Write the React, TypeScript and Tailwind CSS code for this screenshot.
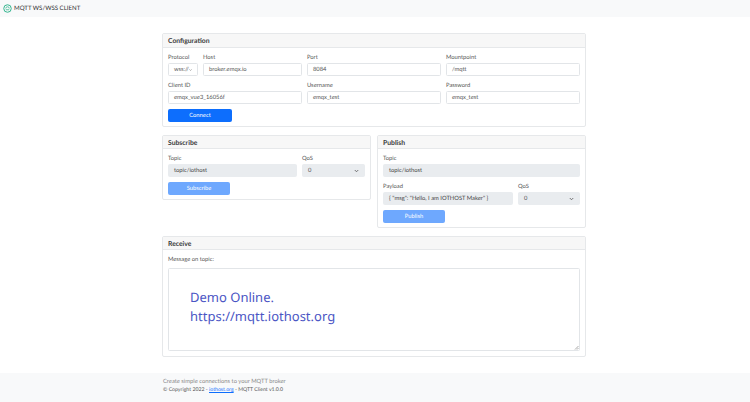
const font = { fontFamily: 'Lato, "Noto Sans", sans-serif' };

function Field({ label, value, className = "", disabled = false }: { label: string; value: string; className?: string; disabled?: boolean }) {
  return (
    <div className={className}>
      <div className="h-[9px] text-[5.8px] leading-[9.5px] text-[#555]">{label}</div>
      <div
        className={`mt-[1px] flex h-[13px] items-center truncate rounded-[1.5px] border border-[#e2e5e8] px-[5px] pt-[1.5px] text-[5.8px] ${
          disabled ? "border-[#e9ecef] bg-[#e9ecef] text-[#444]" : "bg-white text-[#555]"
        }`}
      >
        {value}
      </div>
    </div>
  );
}

function SelectField({ label, value, className = "", disabled = false }: { label: string; value: string; className?: string; disabled?: boolean }) {
  return (
    <div className={className}>
      <div className="h-[9px] text-[5.8px] leading-[9.5px] text-[#555]">{label}</div>
      <div
        className={`mt-[1px] flex h-[13px] items-center justify-between rounded-[1.5px] border pl-[5px] pr-[5px] text-[5.8px] text-[#555] ${
          disabled ? "border-[#e9ecef] bg-[#e9ecef]" : "border-[#e2e5e8] bg-white"
        }`}
      >
        <span className="pt-[1.5px]">{value}</span>
        <svg width="5" height="4" viewBox="0 0 10 8" fill="none" stroke="#555" strokeWidth="1.6">
          <path d="M1.5 2 L5 5.5 L8.5 2" />
        </svg>
      </div>
    </div>
  );
}

function Card({ title, className = "", headClass = "h-[13px]", children }: { title: string; className?: string; headClass?: string; children: React.ReactNode }) {
  return (
    <div className={`overflow-hidden rounded-[2px] border border-[#e6e8ea] bg-white ${className}`}>
      <div className={`flex items-center border-b border-[#e6e8ea] bg-[#f7f7f7] px-[5px] pt-[1.5px] text-[6.8px] font-bold text-[#3a3a3a] ${headClass}`}>
        {title}
      </div>
      <div className="p-[5px]">{children}</div>
    </div>
  );
}

export default function App() {
  return (
    <div className="flex h-[402px] w-[750px] flex-col overflow-hidden bg-white [text-rendering:geometricPrecision]" style={font}>
      {/* Header */}
      <div className="flex h-[17px] items-center gap-[2px] bg-[#f8f9fa] pl-[3px]">
        <svg width="9" height="9" viewBox="0 0 18 18" fill="none">
          <circle cx="9" cy="9" r="7.5" stroke="#36b58f" strokeWidth="2" />
          <path d="M5.5 9 a3.5 3.5 0 0 1 7 0 M5.5 11.5 h7" stroke="#36b58f" strokeWidth="1.6" />
        </svg>
        <span className="text-[6.1px] text-[#333]">MQTT WS/WSS CLIENT</span>
      </div>

      {/* Main */}
      <div className="ml-[162px] mt-[16px] flex w-[424px] flex-col">
        <Card title="Configuration" headClass="h-[14px]" className="h-[94px]">
          <div className="flex gap-[5px]">
            <SelectField label="Protocol" value="wss://" className="w-[30px]" />
            <Field label="Host" value="broker.emqx.io" className="w-[99px]" />
            <Field label="Port" value="8084" className="w-[134px]" />
            <Field label="Mountpoint" value="/mqtt" className="w-[134px]" />
          </div>
          <div className="mt-[5px] flex gap-[5px]">
            <Field label="Client ID" value="emqx_vue3_16056f" className="w-[134px]" />
            <Field label="Username" value="emqx_test" className="w-[134px]" />
            <Field label="Password" value="emqx_test" className="w-[134px]" />
          </div>
          <div className="mt-[5px] flex h-[13px] w-[64px] items-center justify-center rounded-[2px] bg-[#0d6efd] pt-[1.5px] text-[5.8px] text-white">
            Connect
          </div>
        </Card>

        <div className="mt-[8px] flex items-start justify-between">
          <Card title="Subscribe" className="h-[65px] w-[209px]">
            <div className="flex gap-[5px]">
              <Field label="Topic" value="topic/iothost" className="w-[129px]" disabled />
              <SelectField label="QoS" value="0" className="w-[63px]" disabled />
            </div>
            <div className="mt-[5px] flex h-[13px] w-[62px] items-center justify-center rounded-[2px] bg-[#6ea8fe] pt-[1.5px] text-[5.8px] text-white">
              Subscribe
            </div>
          </Card>

          <Card title="Publish" className="h-[93px] w-[209px]">
            <Field label="Topic" value="topic/iothost" disabled />
            <div className="mt-[5px] flex gap-[5px]">
              <Field label="Payload" value='{ "msg": "Hello, I am IOTHOST Maker" }' className="w-[130px]" disabled />
              <SelectField label="QoS" value="0" className="w-[62px]" disabled />
            </div>
            <div className="mt-[5px] flex h-[13px] w-[62px] items-center justify-center rounded-[2px] bg-[#6ea8fe] pt-[1.5px] text-[5.8px] text-white">
              Publish
            </div>
          </Card>
        </div>

        <Card title="Receive" className="mt-[8px] h-[121px]">
          <div className="h-[9px] text-[5.8px] leading-[9.5px] text-[#555]">Message on topic:</div>
          <div className="relative mt-[4px] h-[83px] rounded-[1.5px] border border-[#e2e5e8] bg-white pl-[21px] pt-[19px] text-[13px] leading-[19px] text-[#4a55c4]">
            <div style={{ fontFamily: '"Noto Sans", sans-serif' }}>Demo Online.</div>
            <div style={{ fontFamily: '"Noto Sans", sans-serif' }}>https://mqtt.iothost.org</div>
            <svg className="absolute bottom-[0.5px] right-[0.5px]" width="5" height="5" viewBox="0 0 10 10" stroke="#555" strokeWidth="1">
              <path d="M9 2 L2 9 M9 6 L6 9" />
            </svg>
          </div>
        </Card>
      </div>

      {/* Footer */}
      <div className="mt-auto h-[29px] bg-[#f8f9fa] pl-[163px] pt-[5px] leading-[8px]">
        <div className="text-[5.8px] text-[#888]">Create simple connections to your MQTT broker</div>
        <div className="text-[5.2px] text-[#555]">
          © Copyright 2022 - <span className="text-[#0d6efd] underline">iothost.org</span> - MQTT Client v1.0.0
        </div>
      </div>
    </div>
  );
}
